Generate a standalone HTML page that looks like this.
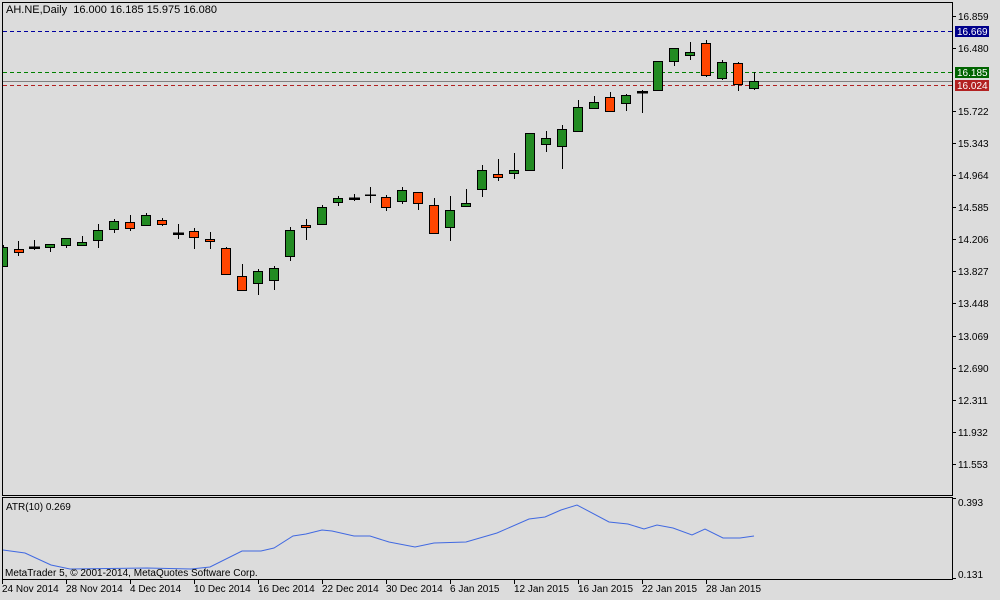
<!DOCTYPE html>
<html><head><meta charset="utf-8"><style>
html,body{margin:0;padding:0;background:#dcdcdc;}
svg{display:block;}
text{font-family:"Liberation Sans",sans-serif;font-size:11px;fill:#000;}
text.s{font-size:10px;}
</style></head><body>
<svg width="1000" height="600" viewBox="0 0 1000 600" xmlns="http://www.w3.org/2000/svg" shape-rendering="crispEdges">
<rect width="1000" height="600" fill="#dcdcdc"/>
<rect x="2.5" y="2.5" width="950" height="493" fill="none" stroke="#000"/>
<rect x="2.5" y="497.5" width="950" height="82" fill="none" stroke="#000"/>
<line x1="3" y1="31.5" x2="952" y2="31.5" stroke="#0000a0" stroke-dasharray="4,3"/>
<line x1="3" y1="72.5" x2="952" y2="72.5" stroke="#008000" stroke-dasharray="4,3"/>
<line x1="3" y1="81.5" x2="952" y2="81.5" stroke="#808080"/>
<line x1="3" y1="85.5" x2="952" y2="85.5" stroke="#b22222" stroke-dasharray="4,3"/>
<text x="6" y="13" xml:space="preserve">AH.NE,Daily  16.000 16.185 15.975 16.080</text>
<g>
<line x1="952" y1="16.5" x2="956" y2="16.5" stroke="#000"/><text class="s" x="958" y="20">16.859</text>
<line x1="952" y1="48.5" x2="956" y2="48.5" stroke="#000"/><text class="s" x="958" y="52">16.480</text>
<line x1="952" y1="111.5" x2="956" y2="111.5" stroke="#000"/><text class="s" x="958" y="115">15.722</text>
<line x1="952" y1="143.5" x2="956" y2="143.5" stroke="#000"/><text class="s" x="958" y="147">15.343</text>
<line x1="952" y1="175.5" x2="956" y2="175.5" stroke="#000"/><text class="s" x="958" y="179">14.964</text>
<line x1="952" y1="207.5" x2="956" y2="207.5" stroke="#000"/><text class="s" x="958" y="211">14.585</text>
<line x1="952" y1="239.5" x2="956" y2="239.5" stroke="#000"/><text class="s" x="958" y="243">14.206</text>
<line x1="952" y1="271.5" x2="956" y2="271.5" stroke="#000"/><text class="s" x="958" y="275">13.827</text>
<line x1="952" y1="303.5" x2="956" y2="303.5" stroke="#000"/><text class="s" x="958" y="307">13.448</text>
<line x1="952" y1="336.5" x2="956" y2="336.5" stroke="#000"/><text class="s" x="958" y="340">13.069</text>
<line x1="952" y1="368.5" x2="956" y2="368.5" stroke="#000"/><text class="s" x="958" y="372">12.690</text>
<line x1="952" y1="400.5" x2="956" y2="400.5" stroke="#000"/><text class="s" x="958" y="404">12.311</text>
<line x1="952" y1="432.5" x2="956" y2="432.5" stroke="#000"/><text class="s" x="958" y="436">11.932</text>
<line x1="952" y1="464.5" x2="956" y2="464.5" stroke="#000"/><text class="s" x="958" y="468">11.553</text>
<rect x="955" y="26" width="34" height="11" fill="#00008b"/><text class="s" x="957" y="35" style="fill:#fff">16.669</text>
<rect x="955" y="67" width="34" height="11" fill="#006400"/><text class="s" x="957" y="76" style="fill:#fff">16.185</text>
<rect x="955" y="80" width="34" height="11" fill="#b22222"/><text class="s" x="957" y="89" style="fill:#fff">16.024</text>
<line x1="952" y1="498.5" x2="956" y2="498.5" stroke="#000"/><text class="s" x="958" y="506">0.393</text>
<line x1="952" y1="578.5" x2="956" y2="578.5" stroke="#000"/><text class="s" x="958" y="578">0.131</text>
</g>
<g stroke="#000">
<line x1="3.5" y1="245" x2="3.5" y2="267"/><rect x="2.5" y="247.5" width="5" height="19" fill="#228b22"/>
<line x1="18.5" y1="241" x2="18.5" y2="256"/><rect x="14.5" y="249.5" width="9" height="3" fill="#ff4500"/>
<line x1="34.5" y1="240" x2="34.5" y2="250"/><rect x="29.5" y="247" width="10" height="1.5" fill="#000"/>
<line x1="50.5" y1="244" x2="50.5" y2="252"/><rect x="45.5" y="244.5" width="9" height="3" fill="#228b22"/>
<line x1="66.5" y1="238" x2="66.5" y2="248"/><rect x="61.5" y="238.5" width="9" height="7" fill="#228b22"/>
<line x1="82.5" y1="236" x2="82.5" y2="245"/><rect x="77.5" y="242.5" width="9" height="3" fill="#228b22"/>
<line x1="98.5" y1="224" x2="98.5" y2="248"/><rect x="93.5" y="230.5" width="9" height="10" fill="#228b22"/>
<line x1="114.5" y1="219" x2="114.5" y2="233"/><rect x="109.5" y="221.5" width="9" height="8" fill="#228b22"/>
<line x1="130.5" y1="215" x2="130.5" y2="231"/><rect x="125.5" y="222.5" width="9" height="6" fill="#ff4500"/>
<line x1="146.5" y1="213" x2="146.5" y2="225"/><rect x="141.5" y="215.5" width="9" height="10" fill="#228b22"/>
<line x1="162.5" y1="218" x2="162.5" y2="226"/><rect x="157.5" y="220.5" width="9" height="4" fill="#ff4500"/>
<line x1="178.5" y1="224" x2="178.5" y2="239"/><rect x="173.5" y="233" width="10" height="1.5" fill="#000"/>
<line x1="194.5" y1="228" x2="194.5" y2="249"/><rect x="189.5" y="231.5" width="9" height="6" fill="#ff4500"/>
<line x1="210.5" y1="232" x2="210.5" y2="249"/><rect x="205.5" y="239.5" width="9" height="2" fill="#ff4500"/>
<line x1="226.5" y1="247" x2="226.5" y2="274"/><rect x="221.5" y="248.5" width="9" height="26" fill="#ff4500"/>
<line x1="242.5" y1="264" x2="242.5" y2="291"/><rect x="237.5" y="276.5" width="9" height="14" fill="#ff4500"/>
<line x1="258.5" y1="269" x2="258.5" y2="295"/><rect x="253.5" y="271.5" width="9" height="12" fill="#228b22"/>
<line x1="274.5" y1="266" x2="274.5" y2="290"/><rect x="269.5" y="268.5" width="9" height="12" fill="#228b22"/>
<line x1="290.5" y1="227" x2="290.5" y2="261"/><rect x="285.5" y="230.5" width="9" height="26" fill="#228b22"/>
<line x1="306.5" y1="219" x2="306.5" y2="240"/><rect x="301.5" y="225.5" width="9" height="2" fill="#ff4500"/>
<line x1="322.5" y1="205" x2="322.5" y2="224"/><rect x="317.5" y="207.5" width="9" height="17" fill="#228b22"/>
<line x1="338.5" y1="196" x2="338.5" y2="206"/><rect x="333.5" y="198.5" width="9" height="4" fill="#228b22"/>
<line x1="354.5" y1="194" x2="354.5" y2="201"/><rect x="349.5" y="198" width="10" height="1.5" fill="#000"/>
<line x1="370.5" y1="187" x2="370.5" y2="203"/><rect x="365.5" y="195" width="10" height="0.5" fill="#000"/>
<line x1="386.5" y1="195" x2="386.5" y2="211"/><rect x="381.5" y="197.5" width="9" height="10" fill="#ff4500"/>
<line x1="402.5" y1="187" x2="402.5" y2="204"/><rect x="397.5" y="190.5" width="9" height="11" fill="#228b22"/>
<line x1="418.5" y1="192" x2="418.5" y2="210"/><rect x="413.5" y="192.5" width="9" height="11" fill="#ff4500"/>
<line x1="434.5" y1="198" x2="434.5" y2="233"/><rect x="429.5" y="205.5" width="9" height="28" fill="#ff4500"/>
<line x1="450.5" y1="196" x2="450.5" y2="241"/><rect x="445.5" y="210.5" width="9" height="17" fill="#228b22"/>
<line x1="466.5" y1="189" x2="466.5" y2="206"/><rect x="461.5" y="203.5" width="9" height="3" fill="#228b22"/>
<line x1="482.5" y1="165" x2="482.5" y2="197"/><rect x="477.5" y="170.5" width="9" height="19" fill="#228b22"/>
<line x1="498.5" y1="159" x2="498.5" y2="181"/><rect x="493.5" y="174.5" width="9" height="3" fill="#ff4500"/>
<line x1="514.5" y1="153" x2="514.5" y2="179"/><rect x="509.5" y="170.5" width="9" height="3" fill="#228b22"/>
<line x1="530.5" y1="133" x2="530.5" y2="170"/><rect x="525.5" y="133.5" width="9" height="37" fill="#228b22"/>
<line x1="546.5" y1="131" x2="546.5" y2="152"/><rect x="541.5" y="138.5" width="9" height="6" fill="#228b22"/>
<line x1="562.5" y1="125" x2="562.5" y2="169"/><rect x="557.5" y="129.5" width="9" height="17" fill="#228b22"/>
<line x1="578.5" y1="100" x2="578.5" y2="131"/><rect x="573.5" y="107.5" width="9" height="24" fill="#228b22"/>
<line x1="594.5" y1="96" x2="594.5" y2="108"/><rect x="589.5" y="102.5" width="9" height="6" fill="#228b22"/>
<line x1="610.5" y1="92" x2="610.5" y2="111"/><rect x="605.5" y="97.5" width="9" height="14" fill="#ff4500"/>
<line x1="626.5" y1="94" x2="626.5" y2="111"/><rect x="621.5" y="95.5" width="9" height="8" fill="#228b22"/>
<line x1="642.5" y1="90" x2="642.5" y2="113"/><rect x="637.5" y="91.5" width="10" height="1.5" fill="#000"/>
<line x1="658.5" y1="61" x2="658.5" y2="91"/><rect x="653.5" y="61.5" width="9" height="29" fill="#228b22"/>
<line x1="674.5" y1="48" x2="674.5" y2="66"/><rect x="669.5" y="48.5" width="9" height="13" fill="#228b22"/>
<line x1="690.5" y1="42" x2="690.5" y2="60"/><rect x="685.5" y="52.5" width="9" height="3" fill="#228b22"/>
<line x1="706.5" y1="40" x2="706.5" y2="77"/><rect x="701.5" y="43.5" width="9" height="32" fill="#ff4500"/>
<line x1="722.5" y1="60" x2="722.5" y2="80"/><rect x="717.5" y="62.5" width="9" height="16" fill="#228b22"/>
<line x1="738.5" y1="62" x2="738.5" y2="91"/><rect x="733.5" y="63.5" width="9" height="21" fill="#ff4500"/>
<line x1="754.5" y1="72" x2="754.5" y2="90"/><rect x="749.5" y="81.5" width="9" height="7" fill="#228b22"/>
</g>
<text class="s" x="6" y="510">ATR(10) 0.269</text>
<polyline fill="none" stroke="#4169e1" stroke-width="1" shape-rendering="auto" points="3,550 25,553 51,565 70,569 147,568 191,569 210,567 242,551 261,551 274,548 293,536 306,534 322,530 332,531 354,536 370,536 389,542 415,547 434,543 466,542 497,533 529,519 545,517 561,510 577,505 609,522 628,524 644,529 657,525 673,528 692,535 705,529 723,538 740,538 754,536"/>
<text class="s" x="5" y="576">MetaTrader 5, © 2001-2014, MetaQuotes Software Corp.</text>
<g stroke="#000">
<line x1="2.5" y1="580" x2="2.5" y2="584"/><line x1="66.5" y1="580" x2="66.5" y2="584"/><line x1="130.5" y1="580" x2="130.5" y2="584"/><line x1="194.5" y1="580" x2="194.5" y2="584"/><line x1="258.5" y1="580" x2="258.5" y2="584"/><line x1="322.5" y1="580" x2="322.5" y2="584"/><line x1="386.5" y1="580" x2="386.5" y2="584"/><line x1="450.5" y1="580" x2="450.5" y2="584"/><line x1="514.5" y1="580" x2="514.5" y2="584"/><line x1="578.5" y1="580" x2="578.5" y2="584"/><line x1="642.5" y1="580" x2="642.5" y2="584"/><line x1="706.5" y1="580" x2="706.5" y2="584"/>
</g>
<text class="s" x="2" y="592">24 Nov 2014</text>
<text class="s" x="66" y="592">28 Nov 2014</text>
<text class="s" x="130" y="592">4 Dec 2014</text>
<text class="s" x="194" y="592">10 Dec 2014</text>
<text class="s" x="258" y="592">16 Dec 2014</text>
<text class="s" x="322" y="592">22 Dec 2014</text>
<text class="s" x="386" y="592">30 Dec 2014</text>
<text class="s" x="450" y="592">6 Jan 2015</text>
<text class="s" x="514" y="592">12 Jan 2015</text>
<text class="s" x="578" y="592">16 Jan 2015</text>
<text class="s" x="642" y="592">22 Jan 2015</text>
<text class="s" x="706" y="592">28 Jan 2015</text>
</svg>
</body></html>
